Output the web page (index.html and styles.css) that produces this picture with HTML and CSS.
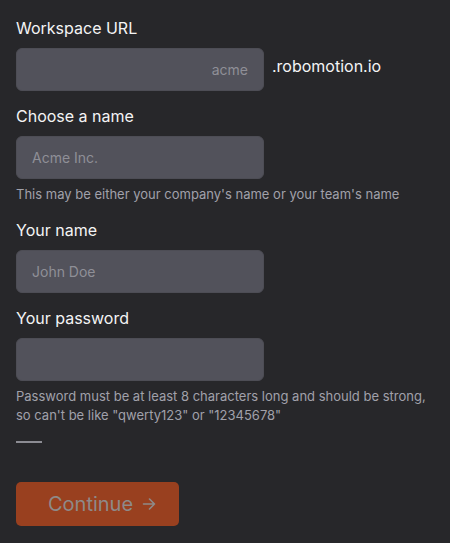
FILE: index.html
```html
<!DOCTYPE html>
<html lang="en">
<head>
<meta charset="utf-8">
<title>Create workspace</title>
<link rel="stylesheet" href="styles.css">
</head>
<body>
<form class="form">
  <div class="field">
    <label class="label">Workspace URL</label>
    <div class="url-row">
      <input class="input input-right" type="text" placeholder="acme">
      <span class="suffix">.robomotion.io</span>
    </div>
  </div>
  <div class="field">
    <label class="label">Choose a name</label>
    <input class="input" type="text" placeholder="Acme Inc.">
    <p class="hint">This may be either your company's name or your team's name</p>
  </div>
  <div class="field">
    <label class="label">Your name</label>
    <input class="input" type="text" placeholder="John Doe">
  </div>
  <div class="field">
    <label class="label">Your password</label>
    <input class="input" type="password">
    <p class="hint">Password must be at least 8 characters long and should be strong, so can't be like "qwerty123" or "12345678"</p>
  </div>
  <div class="divider"></div>
  <button class="button" type="button" disabled>
    <span>Continue</span>
    <svg class="arrow" width="14" height="14" viewBox="0 0 14 14" fill="none" stroke="currentColor" stroke-width="1.6" stroke-linecap="round" stroke-linejoin="round"><path d="M1.5 7h11M7.5 2l5 5-5 5"/></svg>
  </button>
</form>
</body>
</html>
```
FILE: styles.css
```css
html, body {
  margin: 0;
  padding: 0;
  background: #27272a;
}
body {
  font-family: Inter, "Noto Sans", sans-serif;
  color: #f4f4f5;
  height: 543px;
  overflow: hidden;
}
.form {
  display: flex;
  flex-direction: column;
  padding: 16px 16px 0;
}
.field {
  display: flex;
  flex-direction: column;
  align-items: flex-start;
  margin-bottom: 13px;
}
.label {
  font-size: 16px;
  line-height: 24px;
  margin-bottom: 8px;
}
.url-row {
  display: flex;
  align-items: flex-start;
  gap: 8px;
}
.input {
  box-sizing: border-box;
  width: 248px;
  height: 43px;
  margin: 0;
  padding: 0 15px;
  background: #52525b;
  border: 1px solid #4d4d55;
  border-radius: 6px;
  font-family: Inter, "Noto Sans", sans-serif;
  font-size: 14px;
  color: #f4f4f5;
  outline: none;
}
.input::placeholder {
  color: #8f8f97;
}
.input-right {
  text-align: right;
}
.suffix {
  font-size: 16px;
  line-height: 24px;
  margin-top: 6px;
  color: #f4f4f5;
}
.hint {
  margin: 6px 0 0;
  font-size: 13px;
  line-height: 19.5px;
  color: #a1a1aa;
}
.divider {
  width: 26px;
  height: 2px;
  background: #8c8c93;
  margin: 2px 0 39px;
}
.button {
  align-self: flex-start;
  display: flex;
  align-items: center;
  gap: 9px;
  height: 44px;
  padding: 0 23px 0 32px;
  background: #99401f;
  border: none;
  border-radius: 5px;
  font-family: Inter, "Noto Sans", sans-serif;
  font-size: 20px;
  color: #8e8a89;
  cursor: not-allowed;
}
.arrow {
  display: block;
}
```
